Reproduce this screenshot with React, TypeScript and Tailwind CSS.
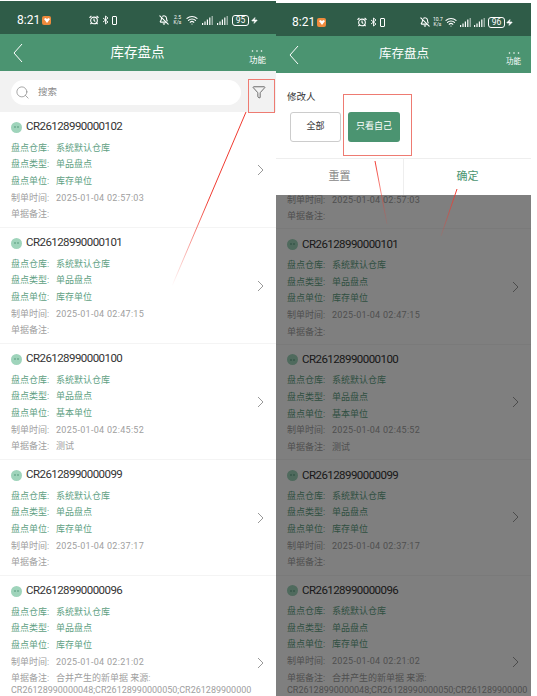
import { AlarmClock, BellOff, Filter, Search, Wifi, Zap } from "lucide-react";

type Row = { no: string; unit: string; time: string; note?: string; long?: boolean };

const rows: Row[] = [
  { no: "CR26128990000102", unit: "库存单位", time: "2025-01-04 02:57:03" },
  { no: "CR26128990000101", unit: "库存单位", time: "2025-01-04 02:47:15" },
  { no: "CR26128990000100", unit: "基本单位", time: "2025-01-04 02:45:52", note: "测试" },
  { no: "CR26128990000099", unit: "库存单位", time: "2025-01-04 02:37:17" },
  { no: "CR26128990000096", unit: "库存单位", time: "2025-01-04 02:21:02", note: "合并产生的新单据 来源:", long: true },
];

function Signal() {
  return (
    <svg width="11" height="9" viewBox="0 0 11 9" fill="currentColor">
      <rect x="0" y="7" width="1.2" height="2" />
      <rect x="2.4" y="5.5" width="1.2" height="3.5" />
      <rect x="4.8" y="3.5" width="1.2" height="5.5" />
      <rect x="7.2" y="1.5" width="1.2" height="7.5" />
      <rect x="9.6" y="0" width="1.2" height="9" opacity="0.6" />
    </svg>
  );
}

function StatusBar({ speed, level, pad, bellGap }: { speed: string; level: string; pad: string; bellGap: string }) {
  return (
    <div className={`h-[33px] bg-[#2f5c48] text-white flex items-center pt-[5px] shrink-0 ${pad}`}>
      <span className="text-[12px] w-[25px]">8:21</span>
      <span className="w-[9px] h-[9px] rounded-[2px] bg-[#ee8a3c] flex items-center justify-center">
        <svg width="6" height="5" viewBox="0 0 6 5" fill="#fff">
          <path d="M0 1L1.5 0L3 1L4.5 0L6 1L3 5Z" />
        </svg>
      </span>
      <div className="flex-1 flex items-center justify-center gap-[3px] pr-[4px]">
        <AlarmClock size={10} strokeWidth={2.6} />
        <svg width="7" height="10" viewBox="0 0 7 10" fill="none" stroke="currentColor" strokeWidth="0.9">
          <path d="M1 3L6 7L3.5 9V1L6 3L1 7" />
        </svg>
        <span className="w-[5px] h-[9px] border border-white rounded-[1px]"></span>
      </div>
      <div className={`flex items-center ${bellGap}`}>
        <BellOff size={10} strokeWidth={2.6} />
        <span className="text-[5px] leading-[5px] w-[9px] text-center">
          {speed}
          <br />
          K/s
        </span>
        <Wifi size={12} strokeWidth={2.4} />
        <Signal />
        <Signal />
        <span className="border border-white rounded-[3px] text-[8.5px] leading-[9px] w-[17px] text-center">{level}</span>
        <Zap size={7} fill="currentColor" className="-ml-[2px]" />
      </div>
    </div>
  );
}

function Header({ title, menu, right }: { title: string; menu: string; right: string }) {
  return (
    <div className="h-[37px] bg-[#4b9471] text-white flex items-center shrink-0">
      <svg width="10" height="20" viewBox="0 0 10 20" fill="none" stroke="currentColor" strokeWidth="1" className="ml-[13px]">
        <path d="M9 1L1 10L9 19" />
      </svg>
      <span className={`flex-1 text-center pl-[3px] ${title}`}>库存盘点</span>
      <div className={`flex flex-col items-center leading-none pt-[9px] ${right}`}>
        <svg width="12" height="2" viewBox="0 0 12 2" fill="currentColor">
          <circle cx="1.5" cy="1" r="0.8" />
          <circle cx="6" cy="1" r="0.8" />
          <circle cx="10.5" cy="1" r="0.8" />
        </svg>
        <span className={`mt-[4px] ${menu}`}>功能</span>
      </div>
    </div>
  );
}

function Card({ row, height }: { row: Row; height: string }) {
  return (
    <div className={`${row.long ? "h-[174px]" : height} bg-white border-b border-[#f4f4f4] pl-[11px] pr-[10px] pt-[8px] relative shrink-0`}>
      <div className="flex items-center h-[14px] gap-[4px]">
        <span className="w-[11px] h-[11px] rounded-full bg-[#9fd4bb] flex items-center justify-center gap-[1px]">
          <span className="w-[2px] h-[2px] rounded-full bg-[#6fae92]"></span>
          <span className="w-[2px] h-[2px] rounded-full bg-[#6fae92]"></span>
        </span>
        <span className="text-[11.5px] tracking-[-0.55px] text-[#333]">{row.no}</span>
      </div>
      <div className="mt-[5.5px] text-[9px] leading-[16.7px] text-[#609f83]">
        <div className="flex"><span className="w-[45px]">盘点仓库:</span>系统默认仓库</div>
        <div className="flex"><span className="w-[45px]">盘点类型:</span>单品盘点</div>
        <div className="flex"><span className="w-[45px]">盘点单位:</span>{row.unit}</div>
      </div>
      <div className="text-[9px] leading-[16.7px] text-[#a0a0a0]">
        <div className="flex"><span className="w-[45px]">制单时间:</span><span className="tracking-[0.3px]">{row.time}</span></div>
        <div className="flex"><span className="w-[45px]">单据备注:</span>{row.note}</div>
        {row.long && <div className="-mt-[5px] whitespace-nowrap">CR26128990000048;CR26128990000050;CR261289900000</div>}
      </div>
      <svg width="7" height="11" viewBox="0 0 7 11" fill="none" stroke="#999" strokeWidth="1" className="absolute right-[12px] top-1/2 -translate-y-1/2">
        <path d="M1 0.5L6 5.5L1 10.5" />
      </svg>
    </div>
  );
}

export default function App() {
  return (
    <div className="w-[537px] h-[696px] bg-white overflow-hidden relative flex items-start font-['Roboto','Noto_Sans_CJK_SC',sans-serif]">
      {/* left phone */}
      <div className="w-[276px] h-[696px] overflow-hidden pt-[1px] flex flex-col">
        <StatusBar speed="2.5" level="95" pad="pl-[17px] pr-[18px]" bellGap="gap-[4px]" />
        <Header title="text-[13.5px]" menu="text-[8.5px]" right="mr-[10px]" />
        <div className="h-[41px] bg-[#f2f2f2] flex items-center pl-[11px] pr-[8px] gap-[11px] shrink-0 pt-[1px]">
          <div className="flex-1 h-[25px] rounded-full bg-white flex items-center pl-[4px] gap-[8px] text-[#8a8a8a]">
            <Search size={15} strokeWidth={1.2} />
            <span className="text-[9.5px]">搜索</span>
          </div>
          <Filter size={14} strokeWidth={1.3} className="text-[#444] mr-[2px]" />
        </div>
        {rows.map((row) => <Card key={row.no} row={row} height="h-[116px]" />)}
      </div>

      {/* right phone */}
      <div className="w-[255px] h-[696px] overflow-hidden pt-[3px] flex flex-col">
        <StatusBar speed="10.7" level="96" pad="pl-[16px] pr-[18px]" bellGap="gap-[3px]" />
        <Header title="text-[12.5px]" menu="text-[7.5px]" right="mr-[10px]" />
        <div className="bg-white h-[85px] pl-[11px] pt-[17px] shrink-0">
          <div className="text-[9.5px] leading-[14px] text-[#333]">修改人</div>
          <div className="flex gap-[7px] mt-[8px]">
            <div className="w-[51px] h-[30px] border border-[#ccc] rounded-[3px] flex items-center justify-center text-[9px] text-[#333] ml-[3px]">全部</div>
            <div className="w-[52px] h-[30px] rounded-[3px] bg-[#4b9471] text-white flex items-center justify-center text-[9px]">只看自己</div>
          </div>
        </div>
        <div className="h-[37px] bg-white border-t border-[#eee] flex items-center text-[11px] shrink-0">
          <div className="flex-1 text-center text-[#888] border-r border-[#eee] leading-[36px]">重置</div>
          <div className="flex-1 text-center text-[#4b9471] leading-[36px]">确定</div>
        </div>
        <div className="relative flex-1 overflow-hidden">
          <div className="-mt-[81px] flex flex-col">
            {rows.map((row) => <Card key={row.no} row={row} height="h-[115.4px]" />)}
          </div>
          <div className="absolute inset-0 bg-black/50"></div>
        </div>
      </div>

      {/* red annotations drawn over the screenshots */}
      <svg className="absolute inset-0" width="537" height="696" fill="none">
        <defs>
          <linearGradient id="fadeA" gradientUnits="userSpaceOnUse" x1="246" y1="112" x2="172" y2="286">
            <stop offset="0" stopColor="#f03a30" />
            <stop offset="0.5" stopColor="#f03a30" />
            <stop offset="1" stopColor="#f03a30" stopOpacity="0" />
          </linearGradient>
          <linearGradient id="fadeB" gradientUnits="userSpaceOnUse" x1="375" y1="161" x2="387" y2="224">
            <stop offset="0" stopColor="#f03a30" />
            <stop offset="1" stopColor="#f03a30" stopOpacity="0.1" />
          </linearGradient>
          <linearGradient id="fadeC" gradientUnits="userSpaceOnUse" x1="457" y1="189" x2="441" y2="236">
            <stop offset="0" stopColor="#f03a30" />
            <stop offset="1" stopColor="#f03a30" stopOpacity="0.1" />
          </linearGradient>
        </defs>
        <rect x="248.5" y="79.5" width="26" height="33" stroke="#ee7b72" />
        <rect x="343.5" y="94.5" width="68" height="61" stroke="#ee7b72" />
        <path d="M246 112L172 286" stroke="url(#fadeA)" />
        <path d="M375 161L387 224" stroke="url(#fadeB)" />
        <path d="M457 189L441 236" stroke="url(#fadeC)" />
      </svg>
    </div>
  );
}
